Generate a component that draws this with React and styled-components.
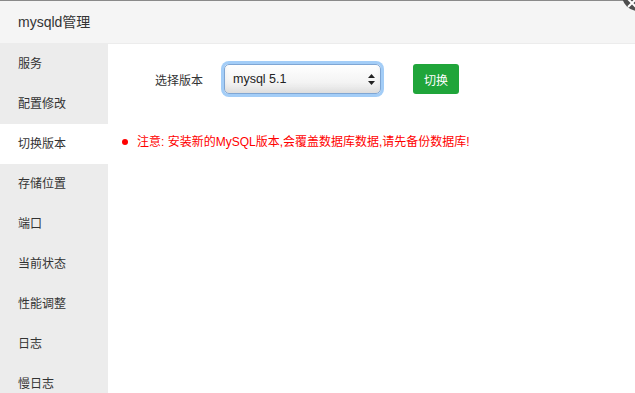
import styled, { createGlobalStyle } from 'styled-components';

const GlobalStyle = createGlobalStyle`
    html, body {
        margin: 0;
        padding: 0;
        background: #fff;
    }
    body {
        font-family: "Liberation Sans", "Noto Sans CJK SC", sans-serif;
        color: #333;
        overflow: hidden;
    }
`;

const Layer = styled.div`
    position: relative;
    height: 100vh;
    border-top: 1px solid #8a8a8a;
    box-sizing: border-box;
    display: flex;
    flex-direction: column;
`;

const Title = styled.div`
    height: 42px;
    line-height: 42px;
    padding-left: 18px;
    font-size: 14px;
    color: #333;
    background: #f5f5f5;
    border-bottom: 1px solid #ececec;
    flex-shrink: 0;
`;

const CloseBtn = styled.span`
    position: absolute;
    top: -22px;
    right: -19px;
    width: 32px;
    height: 32px;
    border-radius: 50%;
    background: #4f4f4f;
    z-index: 2;

    svg {
        position: absolute;
        left: 5px;
        top: 19px;
    }
`;

const Body = styled.div`
    flex: 1;
    display: flex;
    min-height: 0;
`;

const Menu = styled.ul`
    width: 108px;
    margin: 0;
    padding: 0;
    list-style: none;
    background: #ececec;
`;

const MenuItem = styled.li`
    height: 40px;
    line-height: 40px;
    padding-left: 18px;
    font-size: 12px;
    color: #333;
    background: ${p => (p.active ? '#fff' : 'transparent')};
`;

const Content = styled.div`
    flex: 1;
    padding: 20px 0 0 14px;
`;

const FormRow = styled.div`
    display: flex;
    align-items: center;
    height: 30px;
    padding-left: 33px;
`;

const Label = styled.span`
    font-size: 12px;
    color: #333;
    width: 69px;
`;

const SelectBox = styled.div`
    position: relative;
    box-sizing: border-box;
    width: 157px;
    height: 30px;
    border: 1px solid #7fa6d4;
    border-radius: 5px;
    box-shadow: 0 0 0 3px #a3cdf7, inset 0 -6px 8px -4px #d8d8d8;
    background: linear-gradient(#ffffff, #f4f4f4 60%, #e9e9e9);
    display: flex;
    align-items: center;
    padding-left: 8px;
    font-size: 12.5px;
    color: #222;

    svg {
        position: absolute;
        right: 5px;
        top: 9px;
    }
`;

const SwitchBtn = styled.button`
    margin-left: 32px;
    width: 46px;
    height: 30px;
    border: none;
    border-radius: 3px;
    background: #20a53a;
    color: #fff;
    font-family: inherit;
    font-size: 12px;
    padding: 0;
`;

const Tips = styled.ul`
    margin: 39px 0 0;
    padding: 0;
    list-style: none;
`;

const Tip = styled.li`
    display: flex;
    align-items: center;
    font-size: 12px;
    line-height: 18px;
    color: #f00;

    &::before {
        content: '';
        width: 6px;
        height: 6px;
        border-radius: 50%;
        background: #f00;
        margin-right: 9px;
    }
`;

const menus = ['服务', '配置修改', '切换版本', '存储位置', '端口', '当前状态', '性能调整', '日志', '慢日志'];

const App = () => {
    return (
        <Layer>
            <GlobalStyle />
            <Title>mysqld管理</Title>
            <CloseBtn>
                <svg width="10" height="10" viewBox="0 0 10 10">
                    <path d="M1 1 L9 9 M9 1 L1 9" stroke="#fff" strokeWidth="2" />
                </svg>
            </CloseBtn>
            <Body>
                <Menu>
                    {menus.map(m => (
                        <MenuItem key={m} active={m === '切换版本'}>{m}</MenuItem>
                    ))}
                </Menu>
                <Content>
                    <FormRow>
                        <Label>选择版本</Label>
                        <SelectBox>
                            mysql 5.1
                            <svg width="7" height="11" viewBox="0 0 7 11">
                                <path d="M3.5 0 L7 4 L0 4 Z M0 7 L7 7 L3.5 11 Z" fill="#222" />
                            </svg>
                        </SelectBox>
                        <SwitchBtn>切换</SwitchBtn>
                    </FormRow>
                    <Tips>
                        <Tip>注意: 安装新的MySQL版本,会覆盖数据库数据,请先备份数据库!</Tip>
                    </Tips>
                </Content>
            </Body>
        </Layer>
    );
};

export default App;
